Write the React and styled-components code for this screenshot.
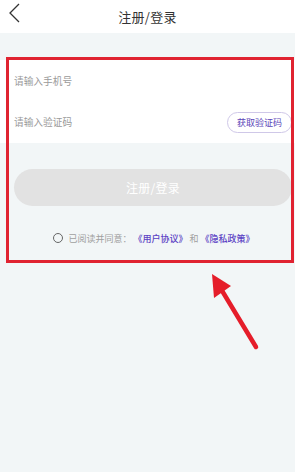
import React, { useState } from "react";
import styled, { createGlobalStyle } from "styled-components";

const GlobalStyle = createGlobalStyle`
  html, body {
    margin: 0;
    padding: 0;
    background: #f2f6f7;
  }
  * {
    box-sizing: border-box;
  }
  body {
    font-family: "Noto Sans CJK SC", "Noto Sans", sans-serif;
  }
`;

function App() {
  const [agreed, setAgreed] = useState(false);
  return (
    <Page>
      <GlobalStyle />
      <Header>
        <BackBtn>
          <svg width="14" height="22" viewBox="0 0 14 22">
            <path d="M12 2 L3 11 L12 20" fill="none" stroke="#333" strokeWidth="1.3" />
          </svg>
        </BackBtn>
        <Title>注册/登录</Title>
      </Header>
      <Spacer />
      <FormPanel>
        <Row>
          <Input placeholder="请输入手机号" />
        </Row>
        <Row>
          <Input placeholder="请输入验证码" />
          <CodeBtn>获取验证码</CodeBtn>
        </Row>
      </FormPanel>
      <SubmitBtn disabled>注册/登录</SubmitBtn>
      <Agreement>
        <Radio checked={agreed} onClick={() => setAgreed(!agreed)} />
        <span>已阅读并同意：</span>
        <Link>《用户协议》</Link>
        <span>和</span>
        <Link>《隐私政策》</Link>
      </Agreement>
      <Highlight />
      <Arrow width="295" height="472" viewBox="0 0 295 472">
        <line x1="256" y1="347" x2="221" y2="289" stroke="#e51d2a" strokeWidth="4.5" strokeLinecap="round" />
        <polygon points="212,274 214,298 231,286" fill="#e51d2a" />
      </Arrow>
    </Page>
  );
}

export default App;

const Page = styled.div`
  position: relative;
  width: 295px;
  height: 472px;
  overflow: hidden;
  background: #f2f6f7;
`;
const Header = styled.div`
  position: relative;
  height: 33px;
  background: #fff;
  display: flex;
  align-items: center;
  justify-content: center;
`;
const BackBtn = styled.div`
  position: absolute;
  left: 7px;
  top: 2px;
  display: flex;
`;
const Title = styled.div`
  font-size: 13px;
  color: #333;
  letter-spacing: 0.3px;
`;
const Spacer = styled.div`
  height: 27px;
`;
const FormPanel = styled.div`
  background: #fff;
  padding: 0 3px 0 14px;
`;
const Row = styled.div`
  height: 41.5px;
  display: flex;
  align-items: center;
  justify-content: space-between;
`;
const Input = styled.input`
  border: none;
  outline: none;
  background: transparent;
  padding: 0;
  font-family: inherit;
  font-size: 9.7px;
  flex: 1;
  min-width: 0;
  &::placeholder {
    color: #9a9a9a;
  }
`;
const CodeBtn = styled.button`
  height: 21px;
  width: 65px;
  border: 1px solid #cfc8e8;
  border-radius: 11px;
  background: #fff;
  color: #5b45b8;
  font-family: inherit;
  font-size: 9px;
  padding: 0;
  display: flex;
  align-items: center;
  justify-content: center;
`;
const SubmitBtn = styled.button`
  display: flex;
  align-items: center;
  justify-content: center;
  margin: 26px 3px 0 14px;
  width: calc(100% - 17px);
  height: 37px;
  border: none;
  border-radius: 19px;
  background: #e2e2e2;
  color: #fff;
  font-family: inherit;
  font-size: 12px;
  letter-spacing: 0.3px;
`;
const Agreement = styled.div`
  margin-top: 25px;
  height: 14px;
  display: flex;
  align-items: center;
  justify-content: center;
  padding-left: 14px;
  font-size: 9px;
  color: #a0a0a0;
  white-space: nowrap;
  span {
    margin: 0 1px;
  }
`;
const Radio = styled.div`
  width: 10px;
  height: 10px;
  border-radius: 50%;
  border: 1.2px solid ${({ checked }) => (checked ? "#5b45b8" : "#666")};
  background: ${({ checked }) => (checked ? "#5b45b8" : "transparent")};
  margin-right: 4px;
  cursor: pointer;
`;
const Link = styled.span`
  color: #5b3fc4;
  font-weight: 500;
`;
const Highlight = styled.div`
  position: absolute;
  left: 6px;
  top: 57px;
  width: 288px;
  height: 206px;
  border: 3px solid #e02331;
  pointer-events: none;
`;
const Arrow = styled.svg`
  position: absolute;
  left: 0;
  top: 0;
  pointer-events: none;
`;
